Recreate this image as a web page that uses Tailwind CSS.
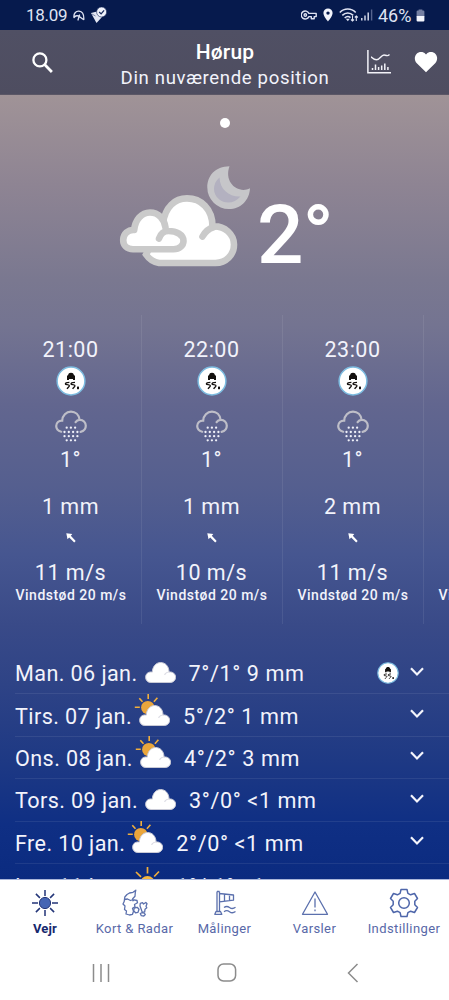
<!DOCTYPE html>
<html lang="da">
<head>
<meta charset="utf-8">
<title>Vejr – Hørup</title>
<script src="https://cdn.jsdelivr.net/npm/@tailwindcss/browser@4"></script>
</head>
<body class="w-[449px] h-[1000px] overflow-hidden bg-white font-['Roboto',sans-serif] text-[#f2f3fb]">
<svg width="0" height="0" class="hidden">
  <defs>
    <symbol id="slip" viewBox="0 0 30 30">
      <circle cx="15" cy="15" r="13.9" fill="#fff" stroke="#7dbce0" stroke-width="1.500"/>
      <path d="M11 9.800l1-.6c.4-1.700 1.200-2.500 3-2.500s2.600.8 3 2.500l1 .6v4.300h-2v-1h-4v1h-2z" fill="#14110f"/>
      <path d="M13.400 16.300c-2 0-4 .7-4 1.600 0 1.100 4.200.5 4 1.900-.1 1-1.400 1.700-2.400 3M19 16.300c-2 0-4 .7-4 1.600 0 1.100 4.200.5 4 1.900-.1 1-1.400 1.700-2.400 3" fill="none" stroke="#14110f" stroke-width="1.350"/>
      <rect x="21" y="20.600" width="2" height="2.600" fill="#14110f"/>
    </symbol>
    <symbol id="sleet" viewBox="0 0 32 32">
      <path d="M6.200 21.700C3.500 21 1.200 19 1.200 16c0-3.300 2.600-5.600 6-5.400C7.400 5.400 11.200 1.600 16 1.600c4.500 0 8 3.200 8.600 8.200 3.600-.2 6.200 2.600 6.200 6 0 3-2.200 5.400-5.200 6M20.600 12.200c.9-1.400 2.300-2.300 4-2.400" fill="none" stroke="#bebec8" stroke-width="2.200" stroke-linecap="round"/>
      <g fill="#f0f1fa">
        <circle cx="11.700" cy="17.700" r="1.150"/><circle cx="15.900" cy="17.700" r="1.150"/><circle cx="20.100" cy="17.700" r="1.150"/>
        <circle cx="9.500" cy="22" r="1.150"/><circle cx="13.800" cy="22" r="1.150"/><circle cx="18.100" cy="22" r="1.150"/><circle cx="22.400" cy="22" r="1.150"/>
        <circle cx="9.500" cy="26.200" r="1.150"/><circle cx="13.800" cy="26.200" r="1.150"/><circle cx="18.100" cy="26.200" r="1.150"/><circle cx="22.400" cy="26.200" r="1.150"/>
        <circle cx="11.700" cy="30.300" r="1.150"/><circle cx="15.900" cy="30.300" r="1.150"/><circle cx="20.100" cy="30.300" r="1.150"/>
      </g>
    </symbol>
    <symbol id="wind" viewBox="0 0 10 10">
      <path d="M.3.300l6 .7-1.500 1.700 4.900 5.300-1.500 1.500-5-5-1.700 1.800z" fill="#fff"/>
    </symbol>
    <symbol id="cloud" viewBox="0 0 38 34">
      <path d="M13 31.500c-3.300 0-5.400-2.400-5.400-5.300 0-2.900 2-4.900 4.500-5.200.9-.1 1.700 0 2.200.1.200-5.600 3.800-9.600 8.400-9.600 4.700 0 8.300 3.900 8.300 9.500 3.700-.5 6.600 1.900 6.600 5.200 0 3.100-2.400 5.300-5.600 5.300z" fill="#fff" stroke="#c9cad6" stroke-width="1"/>
      <path d="M26.800 23.400c.9-1.500 2.400-2.400 4.200-2.400" fill="none" stroke="#dcdce4" stroke-width="1.200" stroke-linecap="round"/>
    </symbol>
    <symbol id="sunbehind" viewBox="0 0 38 34">
      <circle cx="15.800" cy="13.600" r="6.700" fill="#eaa63c"/>
      <path d="M16.200 0v5M7.300 4.200l3.200 3.600M25.400 3.800l-3.500 4M2.800 13.300h5" stroke="#f0ae3c" stroke-width="1.600"/>
      <use href="#cloud" width="38" height="34"/>
    </symbol>
    <symbol id="sun" viewBox="0 0 38 34">
      <circle cx="22.500" cy="19.500" r="7.500" fill="#f5b63c"/>
      <path d="M22.500 3v6.500M11 8l5 4.800M34 7.500l-4.800 5" stroke="#f0ae3c" stroke-width="1.700"/>
    </symbol>
    <symbol id="chev" viewBox="0 0 14 9">
      <path d="M1 1.200l6 6.200 6-6.200" fill="none" stroke="#f4f5fc" stroke-width="2.200"/>
    </symbol>
  </defs>
</svg>

<!-- Status bar -->
<div class="flex h-[30px] items-center bg-[#061a4d] pl-[26px] pr-[24px] text-[17px] text-[#dfe3f2]">
  <span class="mt-[2px] w-[47px] whitespace-nowrap tracking-[-0.3px]">18.09</span>
  <svg class="mt-[2px]" width="12" height="12" viewBox="0 0 12 12" fill="none" stroke="#dfe3f2" stroke-width="1.300" stroke-linecap="round" stroke-linejoin="round"><path d="M1 7.500C.4 3.500 3 .9 6 1.200c3.400.3 5 3.800 4.800 8.300M1 7.500c1.500-2 4-2.500 6-.5M6.500 5l-1.500 5M7 7c1 .8 2.500 2.300 3.800 2.500"/></svg>
  <svg class="ml-[5px] mt-px" width="17" height="17" viewBox="0 0 17 17"><path d="M1 6l6-1.500 5.500 5L6.500 16z" fill="#e4e8f5"/><path d="M2 7l3.500 2" stroke="#5d6b92" stroke-width=".8"/><circle cx="11.600" cy="5" r="5" fill="#f1f3fb" stroke="#17295a" stroke-width=".6"/><path d="M9.200 5l1.900 1.900 3-3.600" fill="none" stroke="#17295a" stroke-width="1.300"/></svg>
  <span class="grow"></span>
  <svg width="16" height="10" viewBox="0 0 16 10" fill="none" stroke="#dfe3f2" stroke-width="1.400" stroke-linejoin="round"><path d="M7.900 3.400A4 4 0 1 0 7.900 6.600h2.400v2.200h2.900V6.600h2V3.400z"/><circle cx="4.300" cy="5" r="1.200"/></svg>
  <svg class="ml-[6px]" width="10" height="14" viewBox="0 0 10 14"><path fill-rule="evenodd" d="M5 .5A4.600 4.600 0 0 0 .4 5.100C.4 8.500 5 13.500 5 13.500s4.600-5 4.600-8.400A4.600 4.600 0 0 0 5 .5zm0 2.900a1.700 1.700 0 1 1 0 3.400 1.700 1.700 0 0 1 0-3.400z" fill="#f2f4fc"/></svg>
  <svg class="ml-[6px]" width="20" height="14" viewBox="0 0 20 14" fill="none" stroke="#dfe3f2" stroke-width="1.600"><path d="M.8 4.500c4.500-4.600 11.400-4.600 15.900 0M3.300 7.400c3.200-3.200 7.700-3.200 10.900 0M5.700 10c1.900-1.800 4-1.800 5.800-.4"/><path d="M6.800 10.800h4L8.800 13.200z" fill="#dfe3f2" stroke="none"/><path d="M13.500 8v5M12 11.500l1.500 1.500 1.500-1.500M17.300 13V8M15.800 9.500L17.300 8l1.500 1.500" stroke-width="1.100"/></svg>
  <svg class="ml-[2px]" width="12" height="12" viewBox="0 0 12 12"><path d="M.8 9v2.500M4 6.500v5M7.200 3.500v8" stroke="#dfe3f2" stroke-width="1.400"/><path d="M10.600.5v11" stroke="#56648f" stroke-width="1.400"/></svg>
  <span class="ml-[5px] mt-px w-[38px] whitespace-nowrap text-[18px]">46%</span>
  <svg class="mt-px" width="9" height="13" viewBox="0 0 9 14"><path d="M2.500 1.500V.500h4v1h1a1.200 1.200 0 0 1 1.200 1.200V8H.300V2.700a1.200 1.200 0 0 1 1.200-1.200z" fill="#747fa2"/><path d="M.3 7.500h8.400v4.800a1.200 1.200 0 0 1-1.200 1.200h-6a1.200 1.200 0 0 1-1.200-1.200z" fill="#f4f6fd"/></svg>
</div>

<!-- Header -->
<header class="flex h-[65px] items-center border-b border-[#5b5766] bg-gradient-to-b from-[#505064] to-[#4e4d60] pl-[32px]">
  <svg width="21" height="21" viewBox="0 0 21 21" fill="none" stroke="#fff" stroke-width="2.300"><circle cx="7.900" cy="7.900" r="6.500"/><path d="M12.600 12.600l7.300 7.300" stroke-width="2.800"/></svg>
  <div class="ml-[52px] mt-[6px] flex w-[240px] flex-col items-center whitespace-nowrap">
    <h1 class="text-[21px] font-medium leading-[24px] tracking-[0.2px] text-white">Hørup</h1>
    <p class="mt-[2px] text-[18.600px] leading-[24px] tracking-[0.64px]">Din nuværende position</p>
  </div>
  <svg class="ml-[22px]" width="24" height="24" viewBox="0 0 24 24" fill="none" stroke="#f2f2f8"><path d="M.9 0v22.800H24" stroke-width="1.500"/><path d="M4 7c1 0 2 2.800 5.500 2.800S14 5 17 5s3 2 5.500-.5" stroke-width="1.400"/><path d="M5.500 18v2M8.500 14.500V20M11.600 17v3M14.700 15.500V20M17.800 13.500V20M20.900 17v3" stroke-width="1.500"/></svg>
  <svg class="ml-[23px]" width="24" height="22" viewBox="0 0 24 22"><path d="M12 21.300L2.800 12.200C.3 9.600.200 5.500 2.500 3 5 .4 9.200.4 11.500 3l.5.600.5-.6C14.800.4 19 .4 21.500 3c2.300 2.500 2.200 6.600-.3 9.200z" fill="#fff"/></svg>
</header>

<!-- Forecast -->
<main class="flex h-[784px] flex-col overflow-hidden bg-[linear-gradient(180deg,#a09397_0px,#8e8493_90px,#7a7890_185px,#747491_230px,#62668f_310px,#555f8f_390px,#465690_460px,#394a88_530px,#2e4386_590px,#1e3984_665px,#0f2f84_730px,#0b2b80_784px)]">
  <div class="flex h-[220px] shrink-0 flex-col">
    <div class="mx-auto mt-[23px] size-[10px] shrink-0 rounded-full bg-white"></div>
    <div class="mt-[37px] flex pl-[119px]">
      <svg width="132" height="104" viewBox="0 0 132 104">
        <path fill-rule="evenodd" d="M110.500 1.300C96 1.500 88.300 11 88.300 22.500A21.500 21.500 0 0 0 110 44c11.600 0 20.500-8.800 21-20.800-11.500 6.200-26.500-5.500-20.500-21.900z" fill="#c6c6c9"/>
        <path d="M100.500 12.500c-7.500 6-7 16.500-.5 21.800 6.500 5.200 16 4 21.500-2.800-11.500.5-20.500-7-21-19z" fill="#b3b1c0"/>
        <path d="M40 98c-6.500-1-10-4-13-8.500L30 84 44 58.500C46 42 56 33.400 68 33.400c14 0 25.500 10.600 25.500 28C106 60.500 115 69.500 115 79.500c0 10.500-8 18.500-18.500 18.500z" fill="#fff" stroke="#cacaca" stroke-width="6.600"/>
        <path d="M83.500 71.500c2.500-4.500 6-8 11-9.300" fill="none" stroke="#cacaca" stroke-width="6.600" stroke-linecap="round"/>
        <path d="M14 84.200C8 84.200 4 80.500 4 75c0-6.500 5-10.500 11-10.500C16 55 22.500 48.500 31 48.500c9 0 15 7 15.400 15.200L50 66c8 0 14.500 3.500 14.500 10 0 4.500-4 8.200-10 8.200z" fill="#fff"/>
        <path d="M49.500 66c8 0 15 3.500 15 10 0 4.500-4 8.200-10 8.200H14C8 84.200 4.200 80.500 4.200 75c0-6 5-10.500 11-10C16 55 22.500 47.500 31 47.500c8.500 0 14.500 6.500 15.500 15M40 73.500c1.500-4.500 5-7.500 9.500-7.500" fill="none" stroke="#cacaca" stroke-width="6.600" stroke-linecap="round" stroke-linejoin="round"/>
      </svg>
      <div class="ml-[6px] mt-[26px] text-[82px] font-medium leading-[88px] tracking-[-1px] text-white">2°</div>
    </div>
  </div>

  <div id="hours" class="flex h-[309px] w-[565px] shrink-0 pl-px"></div>
  <div id="days" class="mt-[28px] shrink-0 pl-[15px]"></div>
</main>

<!-- Tabs -->
<nav class="flex h-[66px] border-t border-[#aab6da] bg-white text-[13px] leading-[16px] tracking-[0.4px] text-[#5868a8]">
  <div class="flex w-[90px] shrink-0 flex-col items-center pt-[9px] font-bold tracking-[0.2px] text-[#16286e]">
    <svg width="28" height="28" viewBox="0 0 28 28"><circle cx="14" cy="14" r="5.600" fill="#4565b4" stroke="#233578" stroke-width="1"/><path d="M14 1v6M14 21v6M1 14h6M21 14h6M4.900 4.900l4 4M19.100 19.100l4 4M4.900 23.100l4-4M19.100 8.900l4-4" stroke="#233578" stroke-width="1.500"/></svg>
    <span class="mt-[4px]">Vejr</span>
  </div>
  <div class="flex w-[89px] shrink-0 flex-col items-center whitespace-nowrap pt-[9px]">
    <svg width="28" height="28" viewBox="0 0 28 28" fill="none" stroke="#5b70ad" stroke-width="1.300" stroke-linejoin="round"><path d="M14.800 1.200L12 3.300 8.500 4 6 5.500 3.800 8l-.6 4.500L2 15l2 2-.5 3.500L5.500 22l-.5 3 3.500 1 3-.7 1-3-1-3 2.500-1.500-.5-2.300 3-1.700-.5-2.300-2.800-.7-1.200 1-.3-2 2.300-2.500.3-4zM3.500 10.500l3-.5 3 1.500 2.500-1"/><path d="M13.200 19l3-.7 1.800 2-1 3-2.500.5-1.800-2zM19 17l.3-2.700 2.200-.6 1 1.300 2.300-1.500 1.200 1.300-1 2.500.8 1.500-1.800 1.500-.3 2.500-2.500.3-.9-2.600zM19.300 24.500l1.500-.8 2.500.3 1 1.500-1.500 1.500-2.500-.3z"/></svg>
    <span class="mt-[4px]">Kort &amp; Radar</span>
  </div>
  <div class="flex w-[91px] shrink-0 flex-col items-center pt-[9px]">
    <svg width="28" height="28" viewBox="0 0 28 28" fill="none" stroke="#5b70ad" stroke-width="1.300" stroke-linejoin="round"><path d="M6 2.500v20M8.500 2.500v20M6 2.500h2.500M5 22.500h4.500l1.300 2.800h-7zM8.500 4.500l14 1.500v5.200l-14 1.600M13.500 5.200v7M18.500 5.800v6"/><path d="M13 18.500c2-1.500 3.500-1.500 5.500 0s4 1.300 6-.2M13 22.700c2-1.500 3.500-1.500 5.500 0s4 1.300 6-.2"/></svg>
    <span class="mt-[4px]">Målinger</span>
  </div>
  <div class="flex w-[89px] shrink-0 flex-col items-center pt-[9px]">
    <svg width="28" height="28" viewBox="0 0 28 28" fill="none" stroke="#5b70ad" stroke-width="1.300" stroke-linejoin="round"><path d="M14 3L1.500 25.300h25z"/><path d="M14 9.500v9M14 20.500v1.800"/></svg>
    <span class="mt-[4px]">Varsler</span>
  </div>
  <div class="flex w-[90px] shrink-0 flex-col items-center pt-[8px]">
    <svg width="30" height="30" viewBox="0 0 30 30" fill="none" stroke="#4e66aa" stroke-width="1.500" stroke-linejoin="round"><path d="M12 1.500h6l.9 3.800 2.700 1.500 3.900-1.300 3 5-2.700 2.700v3.600l2.700 2.700-3 5-3.900-1.300-2.700 1.500-.9 3.800h-6l-.9-3.800-2.700-1.500-3.900 1.300-3-5 2.700-2.700v-3.600l-2.700-2.700 3-5 3.900 1.300 2.700-1.500z"/><circle cx="15" cy="15" r="5.300"/></svg>
    <span class="mt-[3px]">Indstillinger</span>
  </div>
</nav>

<!-- System navigation -->
<div class="flex h-[55px] items-center bg-white pl-[92px]">
  <svg width="18" height="18" viewBox="0 0 18 18" stroke="#8c8c8c" stroke-width="1.500"><path d="M1.500 0v18M9 0v18M16.500 0v18"/></svg>
  <svg class="ml-[107px]" width="20" height="19" viewBox="0 0 20 19" fill="none" stroke="#8c8c8c" stroke-width="1.500"><rect x="1" y="1" width="17.600" height="17" rx="5.500"/></svg>
  <svg class="ml-[110px]" width="12" height="20" viewBox="0 0 12 20" fill="none" stroke="#8c8c8c" stroke-width="1.500"><path d="M10.500 1L1.500 10l9 9"/></svg>
</div>

<script>
const hours = [['21:00','1°','1 mm','11 m/s'],['22:00','1°','1 mm','10 m/s'],['23:00','1°','2 mm','11 m/s'],['','','','']];
document.getElementById('hours').innerHTML = hours.map(([time, temp, rain, wind]) => `
  <div class="flex w-[141px] shrink-0 flex-col items-center border-r border-white/8 whitespace-nowrap text-[21.500px] leading-[26px] tracking-[0.5px]">
    <div class="mt-[22px] h-[26px] pr-px">${time}</div>
    <svg class="mt-[3px] size-[30px] shrink-0"><use href="#slip"/></svg>
    <svg class="mt-[14px] size-[32px] shrink-0"><use href="#sleet"/></svg>
    <div class="mt-[5px] h-[26px] pr-px">${temp}</div>
    <div class="mt-[21px] h-[26px] pr-px">${rain}</div>
    <svg class="mt-[13px] size-[10px] shrink-0"><use href="#wind"/></svg>
    <div class="mt-[17px] h-[26px] pr-px">${wind}</div>
    <div class="-mt-px text-[14px] font-medium leading-[20px] tracking-[0.48px]">Vindstød 20 m/s</div>
  </div>`).join('');

const days = [
  ['Man. 06 jan.','#cloud','7°/1° 9 mm',true],
  ['Tirs. 07 jan.','#sunbehind','5°/2° 1 mm'],
  ['Ons. 08 jan.','#sunbehind','4°/2° 3 mm'],
  ['Tors. 09 jan.','#cloud','3°/0° &lt;1 mm'],
  ['Fre. 10 jan.','#sunbehind','2°/0° &lt;1 mm'],
  ['Lør. 11 jan.','#sun','1°/-1° &lt;1 mm']
];
document.getElementById('days').innerHTML = days.map(([date, icon, text, slip]) => `
  <div class="flex h-[42.400px] items-center border-b border-white/8 pr-[25px] whitespace-nowrap text-[21.600px] leading-[26px] tracking-[0.4px] last:pt-px">
    <span class="mt-[3px]">${date}</span>
    <svg class="-mt-[9px] h-[34px] w-[38px] shrink-0"><use href="${icon}"/></svg>
    <span class="ml-[13px] mt-[3px] grow tracking-[0.600px]">${text}</span>
    ${slip ? '<svg class="mr-[11px] size-[22px] shrink-0"><use href="#slip"/></svg>' : ''}
    <svg class="-mt-[3px] h-[9px] w-[14px] shrink-0"><use href="#chev"/></svg>
  </div>`).join('');
</script>
</body>
</html>
